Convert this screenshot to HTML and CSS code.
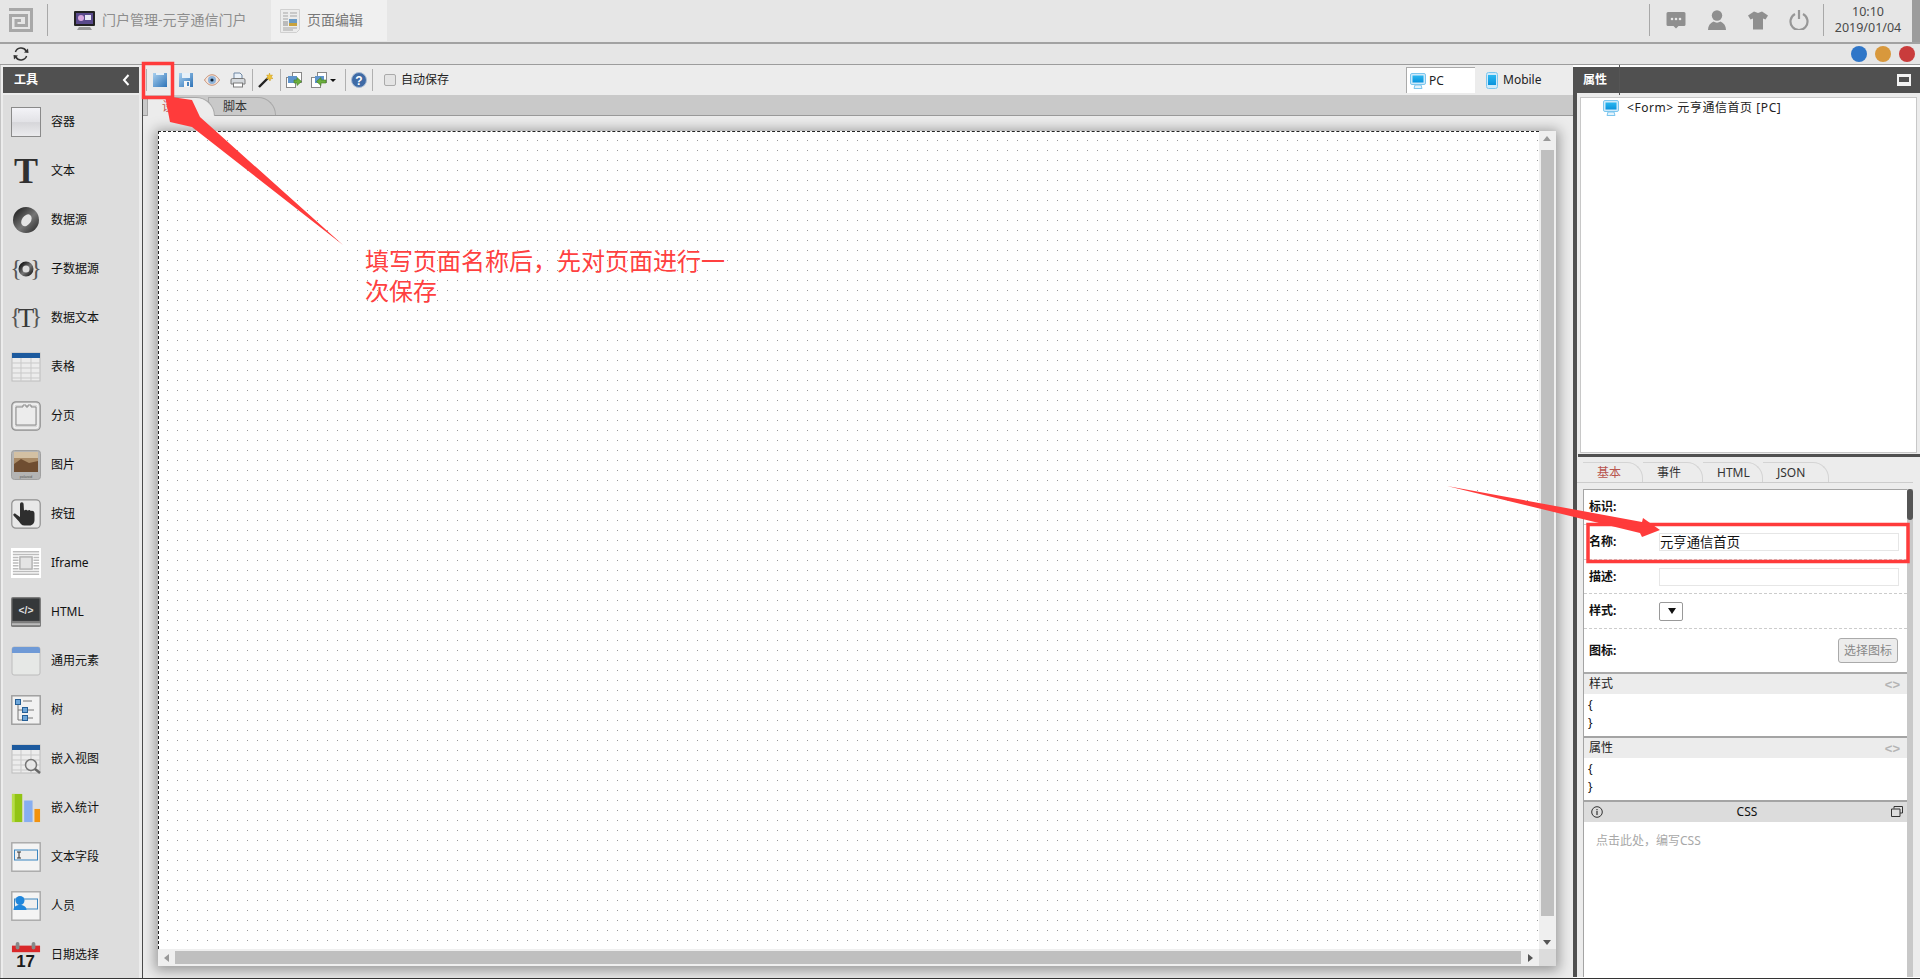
FILE: index.html
```html
<!DOCTYPE html>
<html lang="zh">
<head>
<meta charset="utf-8">
<title>页面编辑</title>
<link rel="stylesheet" href="styles.css">
</head>
<body>
<svg class="defs" aria-hidden="true">
  <defs>
    <linearGradient id="gGlass" x1="0" y1="0" x2="0" y2="1"><stop offset="0" stop-color="#f4f4f8"/><stop offset=".5" stop-color="#e2e2e6"/><stop offset=".52" stop-color="#d6d6da"/><stop offset="1" stop-color="#ececee"/></linearGradient>
    <linearGradient id="gRing" x1="0" y1="0" x2="1" y2="1"><stop offset="0" stop-color="#111"/><stop offset=".55" stop-color="#777"/><stop offset="1" stop-color="#222"/></linearGradient>
    <linearGradient id="gBlue" x1="0" y1="0" x2="1" y2="1"><stop offset="0" stop-color="#a9d0ef"/><stop offset="1" stop-color="#2f74b8"/></linearGradient>
    <linearGradient id="gScreen" x1="0" y1="0" x2="0" y2="1"><stop offset="0" stop-color="#2bb7f0"/><stop offset="1" stop-color="#0a93dc"/></linearGradient>
    <symbol id="pc" viewBox="0 0 16 16">
      <rect x=".5" y=".5" width="15" height="11" rx="1.5" fill="#cfeafa" stroke="#7cc6ee"/>
      <rect x="2.5" y="2.5" width="11" height="7" fill="url(#gScreen)"/>
      <path d="M5 12h6l1 3.5H4z" fill="#e3f3fc" stroke="#7cc6ee"/>
    </symbol>
    <symbol id="grid" viewBox="0 0 30 30">
      <rect x="1" y="1" width="28" height="28" fill="#ececec" stroke="#bdbdbd"/>
      <rect x="1" y="1" width="28" height="5" fill="#1c5a9e"/>
      <path d="M1 11h28M1 16h28M1 21h28M1 26h28M10 6v23M20 6v23" stroke="#c9c9c9" fill="none"/>
    </symbol>
  </defs>
</svg>

<header class="topbar">
  <svg class="logo" viewBox="0 0 24 24"><path d="M0 1.500H22.500V22.500H1.500V7.500H17.500V17.500H7V12.500H12" fill="none" stroke="#a8a8a8" stroke-width="3"/></svg>
  <span class="top-sep top-sep-a"></span>
  <div class="task">
    <svg class="task-ico" viewBox="0 0 23 19"><rect x="1" y="0" width="21" height="15" rx="1" fill="#222"/><rect x="3" y="2" width="17" height="11" fill="#5a4a8c"/><circle cx="8" cy="7" r="3" fill="#d9a8e0"/><rect x="12" y="4" width="6" height="5" fill="#e8e8f4"/><path d="M6 16h11l2 3H4z" fill="#9a9a9a"/></svg>
    <span>门户管理-元亨通信门户</span>
  </div>
  <div class="task task-on">
    <svg class="task-ico task-ico-b" viewBox="0 0 20 24"><path d="M.5.5h19v20l-3 3H.5z" fill="#ececec" stroke="#d0d0d0"/><path d="M3 4h5M10 4h7M3 7h5M10 7h7M3 10h5M3 19h14M3 21h10" stroke="#a5a5a5"/><rect x="9" y="10" width="8" height="7" fill="#6c9bc4"/><rect x="9" y="14" width="8" height="3" fill="#c9a23c"/><rect x="3" y="12" width="5" height="5" fill="#bbb"/></svg>
    <span>页面编辑</span>
  </div>
  <div class="top-right">
    <span class="top-sep"></span>
    <svg class="sys" viewBox="0 0 20 20"><path d="M2 2h16a1.500 1.500 0 0 1 1.500 1.500v11a1.500 1.500 0 0 1-1.500 1.500h-5.500l-2.500 2.500-2.500-2.500H2a1.500 1.500 0 0 1-1.500-1.500v-11A1.500 1.500 0 0 1 2 2z" fill="#8f8f8f"/><circle cx="6" cy="9" r="1.300" fill="#e6e6e6"/><circle cx="10" cy="9" r="1.300" fill="#e6e6e6"/><circle cx="14" cy="9" r="1.300" fill="#e6e6e6"/></svg>
    <svg class="sys" viewBox="0 0 20 20"><circle cx="10" cy="5.500" r="5.200" fill="#8f8f8f"/><path d="M1 20c0-4 2-7 5.500-8.500 2 1.500 5 1.500 7 0C17 13 19 16 19 20z" fill="#8f8f8f"/></svg>
    <svg class="sys" viewBox="0 0 20 20"><path d="M6 1.500l4 1.500 4-1.500 6 4-2.500 4-2.500-1v11H5V8.500l-2.500 1L0 5.500z" fill="#8f8f8f"/></svg>
    <svg class="sys" viewBox="0 0 20 20"><path d="M6 4a8.500 8.500 0 1 0 8 0" fill="none" stroke="#979797" stroke-width="2.200"/><path d="M10 0v9" stroke="#979797" stroke-width="2.200"/></svg>
    <span class="top-sep"></span>
    <div class="clock"><span>10:10</span><span>2019/01/04</span></div>
    <span class="top-end"></span>
  </div>
</header>

<div class="subbar">
  <svg class="refresh" viewBox="0 0 16 16"><path d="M2.400 6A6 6 0 0 1 13.200 5M13.600 10A6 6 0 0 1 2.800 11" fill="none" stroke="#333" stroke-width="1.500"/><path d="M15 2.500l.5 4.500-4.500-.5zM1 13.500L.5 9l4.500.5z" fill="#333"/></svg>
  <div class="lights"><i class="light l-blue"></i><i class="light l-orange"></i><i class="light l-red"></i></div>
</div>

<main class="main">
  <aside class="tools">
    <div class="panel-head"><span>工具</span><svg class="chev" viewBox="0 0 8 12"><path d="M6.500 1L2 6l4.500 5" fill="none" stroke="#fff" stroke-width="2"/></svg></div>
    <ul class="tool-list">
      <li><svg viewBox="0 0 30 30"><rect x=".5" y=".5" width="29" height="29" fill="url(#gGlass)" stroke="#8a8a8a"/></svg>容器</li>
      <li><svg viewBox="0 0 30 30"><text x="15" y="27" class="ico-t">T</text></svg>文本</li>
      <li><svg viewBox="0 0 30 30"><circle cx="15" cy="15" r="13" fill="url(#gRing)"/><ellipse cx="15.500" cy="15" rx="4.500" ry="6.500" transform="rotate(35 15 15)" fill="#e4e4e4"/></svg>数据源</li>
      <li><svg viewBox="0 0 30 30"><text x="5" y="22" class="ico-b">{</text><text x="25" y="22" class="ico-b">}</text><circle cx="15" cy="15" r="5.500" fill="#ddd" stroke="url(#gRing)" stroke-width="4"/></svg>子数据源</li>
      <li><svg viewBox="0 0 30 30"><text x="4.500" y="21" class="ico-b">{</text><text x="25.500" y="21" class="ico-b">}</text><text x="15" y="24" class="ico-s">T</text></svg>数据文本</li>
      <li><svg viewBox="0 0 30 30"><use href="#grid"/></svg>表格</li>
      <li><svg viewBox="0 0 30 30"><rect x=".8" y=".8" width="28.400" height="28.400" rx="4" fill="#d8d8d8" stroke="#8f8f8f" stroke-width="1.200"/><rect x="3" y="3" width="24" height="24" rx="2" fill="none" stroke="#fff"/><path d="M5 24V6h7V4h3v2h2V4h3v2h5v18z" fill="#ececec" stroke="#8a8a8a"/></svg>分页</li>
      <li><svg viewBox="0 0 30 30"><rect x=".5" y=".5" width="29" height="29" rx="3" fill="#b4b4b4" stroke="#a0a0a0"/><rect x="3" y="2" width="24" height="20" fill="#a98a66"/><path d="M3 14l7-5 8 4 9-2v11H3z" fill="#6f4d31"/><rect x="3" y="2" width="24" height="6" fill="#d3c0a3"/><text x="15" y="27.500" class="ico-p">polaroid</text></svg>图片</li>
      <li><svg viewBox="0 0 30 30"><rect x=".8" y=".8" width="28.400" height="28.400" rx="4" fill="#e8e8e8" stroke="#8f8f8f" stroke-width="1.200"/><path d="M9 5a1.800 1.800 0 0 1 3.600 0l.4 6.500 1-.5a1.600 1.600 0 0 1 2.300.6l1.200-.4a1.600 1.600 0 0 1 2.200.8l1.200-.2c1.700 0 2.600 1.200 2.600 2.700V21c0 3-2 5.500-5 5.500h-5c-3 0-4-2-5.500-4L2.500 16.500c-.8-1.200 1-2.700 2.200-1.600L9 18z" fill="#2e2e2e"/></svg>按钮</li>
      <li><svg viewBox="0 0 32 32"><rect width="32" height="32" fill="#fff"/><path d="M2 4h28M2 7h28M2 10h6M24 10h6M2 13h6M24 13h6M2 16h6M24 16h6M2 19h6M24 19h6M2 22h6M24 22h6M2 25h28M2 28h28" stroke="#bcbcbc" stroke-width="1.600"/><rect x="9.500" y="9.500" width="13" height="13" fill="#e4e4e4" stroke="#b0b0b0" stroke-width="1.500"/></svg>Iframe</li>
      <li><svg viewBox="0 0 32 32"><rect width="32" height="32" rx="2" fill="#7c7c7c"/><rect x="1.500" y="1.500" width="29" height="24" fill="#35383a"/><rect x="1" y="28" width="30" height="2" fill="#bbb"/><text x="16" y="18" class="ico-h">&lt;/&gt;</text></svg>HTML</li>
      <li><svg viewBox="0 0 30 30"><rect x="1" y="1" width="28" height="28" rx="2" fill="#e6e8e6" stroke="#bcbcbc"/><path d="M1 3a2 2 0 0 1 2-2h24a2 2 0 0 1 2 2v4H1z" fill="#6f9ad6"/></svg>通用元素</li>
      <li><svg viewBox="0 0 30 30"><rect x=".8" y=".8" width="28.400" height="28.400" fill="#f1f1f1" stroke="#9c9c9c" stroke-width="1.400"/><path d="M7 8v17h6M7 15h6M12 6h9M16 15h7M16 23h6" fill="none" stroke="#777"/><g fill="#6da5d8" stroke="#255f96"><rect x="4.500" y="4.500" width="5" height="5"/><rect x="11.500" y="12.500" width="5" height="5"/><rect x="11.500" y="20.500" width="5" height="5"/></g></svg>树</li>
      <li><svg viewBox="0 0 30 30"><use href="#grid"/><circle cx="20" cy="21" r="5.500" fill="#e8e8e8" fill-opacity=".8" stroke="#777" stroke-width="1.500"/><path d="M24 25l5 4" stroke="#666" stroke-width="2.500"/></svg>嵌入视图</li>
      <li><svg viewBox="0 0 32 32"><path d="M1 1h11v30H1z" fill="#92c414"/><path d="M1 1h3v30H1z" fill="#b7dd4a"/><path d="M14 8h9v23h-9z" fill="#87aef0"/><path d="M25 17h6v14h-6z" fill="#f2920f"/></svg>嵌入统计</li>
      <li><svg viewBox="0 0 30 30"><rect x=".8" y=".8" width="28.400" height="28.400" fill="#f4f4f4" stroke="#a8a8a8" stroke-width="1.400"/><rect x="3.500" y="8" width="23" height="10" fill="#efefef" stroke="#3a85c0"/><path d="M6 10h4M6 16h4M8 10v6" stroke="#333"/></svg>文本字段</li>
      <li><svg viewBox="0 0 30 30"><rect x=".8" y=".8" width="28.400" height="28.400" fill="#f4f4f4" stroke="#a8a8a8" stroke-width="1.400"/><rect x="3.500" y="8" width="23" height="10" fill="#efefef" stroke="#3a85c0"/><circle cx="9" cy="9.500" r="4.500" fill="#1f86dc"/><path d="M2.500 19c0-3.500 3-5 6.500-5s6.500 1.500 6.500 5z" fill="#1f86dc"/></svg>人员</li>
      <li><svg viewBox="0 0 32 30"><path d="M1 5h30v7H1z" fill="#d9282a"/><rect x="5" y="1" width="4" height="8" rx="2" fill="#888"/><rect x="22" y="1" width="4" height="8" rx="2" fill="#888"/><text x="15.500" y="28" class="ico-d">17</text></svg>日期选择</li>
    </ul>
  </aside>

  <section class="center">
    <div class="toolbar">
      <span class="tb-sep tb-sep-first"></span>
      <button class="tb" type="button"><svg viewBox="0 0 14 14"><rect width="14" height="14" fill="url(#gBlue)"/><rect x="3" y="0" width="8" height="2" fill="#e6f0f8"/></svg></button>
      <button class="tb" type="button"><svg viewBox="0 0 14 14"><rect width="14" height="14" fill="url(#gBlue)"/><rect x="3" y="0" width="8" height="5" fill="#e6f0f8"/><rect x="5" y="8" width="6" height="6" fill="#f6f6f6"/><rect x="8" y="9" width="2" height="4" fill="#4a86c0"/></svg></button>
      <button class="tb" type="button"><svg class="wide" viewBox="0 0 16 12"><path d="M.5 6C3 2 5.500.8 8 .8S13 2 15.500 6C13 10 10.500 11.200 8 11.200S3 10 .5 6z" fill="#f3e4dc" stroke="#c98f70"/><circle cx="8" cy="6" r="4" fill="#8fb4da"/><circle cx="8" cy="6" r="1.600" fill="#123"/></svg></button>
      <button class="tb" type="button"><svg class="wide" viewBox="0 0 16 16"><path d="M4 7V1h6l2 2v4" fill="#eaf1f8" stroke="#6f87a3"/><path d="M1 8a1.500 1.500 0 0 1 1.500-1.500h11A1.500 1.500 0 0 1 15 8v4H1z" fill="#d4d8dc" stroke="#7a7a7a"/><rect x="3.500" y="11" width="9" height="4" fill="#fff" stroke="#7a7a7a"/></svg></button>
      <span class="tb-sep"></span>
      <button class="tb" type="button"><svg class="wide" viewBox="0 0 16 16"><path d="M1 15L10 6" stroke="#222" stroke-width="2.400"/><path d="M11.500 1l.7 2.300 2.300-.3-1.300 2 1.800 1.500-2.400.3L12 9l-1.200-2.200-2.300.1 1.400-1.900L8.700 3l2.200.3z" fill="#f1c232" stroke="#c89a1c" stroke-width=".5"/></svg></button>
      <span class="tb-sep"></span>
      <button class="tb" type="button"><svg class="wide" viewBox="0 0 16 16"><rect x="6.500" y=".5" width="9" height="10" fill="#fff" stroke="#888"/><rect x=".5" y="5.500" width="9" height="10" fill="#fff" stroke="#888"/><rect x="2" y="4" width="9" height="7" fill="#5f94cc"/><path d="M8 8h3V5.500l4.500 4-4.500 4V11H8z" fill="#6cae3e" stroke="#3f7d1e" stroke-width=".6"/></svg></button>
      <button class="tb tb-caret" type="button"><svg class="wide" viewBox="0 0 16 16"><rect x="6.500" y=".5" width="9" height="10" fill="#fff" stroke="#888"/><rect x=".5" y="5.500" width="9" height="10" fill="#fff" stroke="#888"/><rect x="4" y="4" width="9" height="7" fill="#5f94cc"/><path d="M15 8h-5V5.500l-4.500 4 4.500 4V11h5z" fill="#6cae3e" stroke="#3f7d1e" stroke-width=".6"/></svg><i class="caret"></i></button>
      <span class="tb-sep"></span>
      <button class="tb tb-help" type="button"><svg class="wide" viewBox="0 0 16 16"><circle cx="8" cy="8" r="7.500" fill="#3f6ba6" stroke="#a9bcd4"/><text x="8" y="12.500" class="ico-q">?</text></svg></button>
      <span class="tb-sep"></span>
      <label class="autosave"><span class="check"></span>自动保存</label>
      <div class="views">
        <div class="view view-on"><svg viewBox="0 0 16 16"><use href="#pc"/></svg>PC</div>
        <div class="view view-m"><svg class="mob" viewBox="0 0 12 17"><rect x=".5" y=".5" width="11" height="16" rx="2" fill="#cfeafa" stroke="#7cc6ee"/><rect x="2" y="3" width="8" height="10" fill="url(#gScreen)"/></svg>Mobile</div>
      </div>
    </div>
    <div class="doc-tabs">
      <div class="doc-tab doc-tab-on">设计</div>
      <div class="doc-tab">脚本</div>
    </div>
    <div class="stage">
      <div class="canvas">
        <div class="canvas-row">
          <div class="dots"></div>
          <div class="vscroll"><i class="arr arr-up"></i><span class="vthumb"></span><i class="arr arr-down"></i></div>
        </div>
        <div class="hscroll"><i class="arr arr-left"></i><span class="hthumb"></span><i class="arr arr-right"></i><span class="corner"></span></div>
      </div>
    </div>
  </section>

  <aside class="props">
    <div class="panel-head panel-head-r"><span>属性</span><svg class="maxi" viewBox="0 0 14 12"><rect width="14" height="12" fill="#f2f2f2"/><rect x="2" y="3" width="10" height="5" fill="#505050"/></svg></div>
    <div class="props-body">
      <div class="tree"><svg viewBox="0 0 16 16"><use href="#pc"/></svg><span>&lt;Form&gt; 元亨通信首页 [PC]</span></div>
      <div class="divider"></div>
      <div class="prop-tabs">
        <div class="prop-tab prop-tab-on">基本</div>
        <div class="prop-tab">事件</div>
        <div class="prop-tab">HTML</div>
        <div class="prop-tab prop-tab-last">JSON</div>
      </div>
      <div class="form-wrap">
        <div class="form">
          <div class="row row-a"><b>标识:</b></div>
          <div class="row row-a"><b>名称:</b><span class="field">元亨通信首页</span></div>
          <div class="row row-c"><b>描述:</b><span class="field"></span></div>
          <div class="row row-a"><b>样式:</b><span class="select"><i></i></span></div>
          <div class="row row-e"><b>图标:</b><button class="pick" type="button">选择图标</button></div>
          <div class="sec-head"><span>样式</span><em>&lt;&gt;</em></div>
          <div class="code">{<br>}</div>
          <div class="sec-head"><span>属性</span><em>&lt;&gt;</em></div>
          <div class="code">{<br>}</div>
          <div class="css-head">
            <svg viewBox="0 0 12 12"><circle cx="6" cy="6" r="5.300" fill="none" stroke="#333" stroke-width="1"/><path d="M6 5v4M6 3v1.200" stroke="#333" stroke-width="1.200"/></svg>
            <span>CSS</span>
            <svg viewBox="0 0 12 12"><path d="M3 2.500V.5h8.500v6.500H9M.5 3h8.500v7.500H.5z" fill="none" stroke="#333"/></svg>
          </div>
          <div class="css-body">点击此处，编写CSS</div>
        </div>
        <div class="form-scroll"><span></span></div>
      </div>
    </div>
  </aside>
</main>

<svg class="marks" viewBox="0 0 1920 979" aria-hidden="true">
  <rect class="mark-box" x="143.500" y="63.500" width="29" height="34"/>
  <polygon class="mark-fill" points="343,245 200,117 192,100 165,96 170,122 192,127"/>
  <polygon class="mark-fill" points="1447,486 1642,522 1643,518 1660,530 1642,537 1640,533"/>
  <rect class="mark-box" x="1588" y="524.500" width="320" height="37"/>
</svg>
<p class="note">填写页面名称后，先对页面进行一次保存</p>
</body>
</html>
```

FILE: styles.css
```css
* { box-sizing: border-box; }
html, body { margin: 0; height: 979px; overflow: hidden; }
body {
  position: relative;
  display: flex;
  flex-direction: column;
  background: #ececec;
  color: #222;
  font: 12px/1.3 "Noto Sans", "Noto Sans CJK SC", sans-serif;
}
.defs { position: absolute; width: 0; height: 0; }

/* top bar */
.topbar {
  height: 44px;
  flex: none;
  display: flex;
  align-items: flex-start;
  background: #e6e6e6;
  border-bottom: 2px solid #a2a2a2;
  padding-left: 9px;
}
.logo { width: 24px; height: 24px; margin-top: 8px; flex: none; }
.top-sep { width: 1px; height: 32px; margin-top: 4px; background: #a8a8a8; flex: none; }
.top-sep-a { margin-left: 14px; margin-right: 25px; }
.task {
  height: 41px;
  display: flex;
  align-items: center;
  gap: 6px;
  font-size: 14px;
  color: #8d8d8d;
  width: 198px;
}
.task-ico { width: 23px; height: 19px; flex: none; }
.task-on { width: 116px; background: #f0f0f0; padding-left: 9px; color: #777; gap: 7px; }
.task-ico-b { width: 20px; height: 24px; }
.top-right { margin-left: auto; display: flex; align-items: flex-start; }
.sys { width: 20px; height: 20px; margin: 10px 0 0 21px; flex: none; }
.sys:first-of-type { margin-left: 16px; }
.clock {
  width: 88px;
  padding-top: 4px;
  display: flex;
  flex-direction: column;
  align-items: center;
  line-height: 16px;
  font-size: 12.500px;
  color: #4a4a4a;
}
.top-end { width: 8px; height: 42px; background: #9c9c9c; }
.sys + .top-sep { margin-left: 14px; }

/* second bar */
.subbar {
  height: 21px;
  flex: none;
  display: flex;
  align-items: center;
  justify-content: space-between;
  padding: 0 5px 0 13px;
  background: #e6e6e6;
  border-bottom: 1px solid #9c9c9c;
}
.refresh { width: 16px; height: 16px; }
.lights { display: flex; gap: 8px; }
.light { width: 16px; height: 16px; border-radius: 50%; }
.l-blue { background: #2f76c8; }
.l-orange { background: #d8983c; }
.l-red { background: #c93c3c; }

/* main */
.main {
  flex: 1;
  min-height: 0;
  display: flex;
  border-bottom: 1px solid #333;
}

/* tools */
.tools {
  width: 142px;
  flex: none;
  padding: 2px 3px 0 2px;
  overflow: hidden;
  background: #ececec;
  border-left: 1px solid #c4c4c4;
}
.panel-head {
  height: 26px;
  display: flex;
  align-items: center;
  justify-content: space-between;
  padding: 0 9px 0 11px;
  background: #505050;
  color: #fff;
  font-weight: 700;
}
.chev { width: 8px; height: 12px; }
.tool-list {
  list-style: none;
  margin: 2px 0 0;
  padding: 2px 0 0 8px;
  height: 890px;
  background: #dddddd;
  overflow: hidden;
  color: #111;
}
.tool-list li {
  height: 49px;
  display: flex;
  align-items: center;
  gap: 10px;
}
.tool-list svg { width: 30px; height: 30px; flex: none; overflow: visible; }
.ico-t { font: 700 36px "Liberation Serif", serif; text-anchor: middle; fill: #303030; }
.ico-s { font: 400 27px "Liberation Serif", serif; text-anchor: middle; fill: #3a3a3a; }
.ico-b { font: 400 24px "Liberation Serif", serif; text-anchor: middle; fill: #555; }
.ico-p { font: 400 3.500px "Liberation Sans", sans-serif; text-anchor: middle; fill: #555; }
.ico-h { font: 700 11px "Liberation Sans", sans-serif; text-anchor: middle; fill: #ddd; }
.ico-d { font: 700 18px "Liberation Sans", sans-serif; text-anchor: middle; fill: #1b1b1b; }
.ico-q { font: 700 12px "Liberation Sans", sans-serif; text-anchor: middle; fill: #fff; }

/* centre */
.center {
  flex: 1;
  min-width: 0;
  display: flex;
  flex-direction: column;
  border-left: 1px solid #4a4a4a;
  background: #ececec;
}
.toolbar {
  height: 30px;
  flex: none;
  display: flex;
  align-items: center;
  padding-left: 3px;
}
.tb {
  width: 26px;
  height: 26px;
  flex: none;
  padding: 0;
  border: 0;
  background: none;
  display: flex;
  align-items: center;
  justify-content: center;
}
.tb svg { width: 14px; height: 14px; }
.tb svg.wide { width: 16px; height: 16px; }
.tb-sep { width: 1px; height: 22px; margin-left: 1px; background: #b0b0b0; flex: none; }
.tb-sep-first { margin-left: 0; }
.tb-caret { width: 37px; justify-content: flex-start; padding-left: 4px; gap: 3px; }
.tb-help { width: 25px; }
.caret { border: 3px solid transparent; border-top: 3px solid #111; border-bottom: 0; }
.autosave { display: flex; align-items: center; gap: 5px; margin-left: 11px; color: #222; }
.check {
  width: 12px;
  height: 12px;
  border: 1px solid #aaa;
  border-radius: 2px;
  background: #e4e4e4;
}
.views { margin-left: auto; display: flex; padding-right: 15px; }
.view {
  height: 26px;
  display: flex;
  align-items: center;
  gap: 3px;
  padding-left: 3px;
  width: 69px;
  font-size: 12px;
}
.view svg { width: 16px; height: 16px; }
.view-on { background: #fff; border-left: 1px solid #aaa; border-top: 1px solid #aaa; }
.view-m { width: 83px; padding-left: 11px; gap: 5px; }
.view svg.mob { width: 12px; height: 17px; }
.doc-tabs {
  height: 21px;
  flex: none;
  display: flex;
  align-items: flex-end;
  padding-left: 4px;
  background: #c9c9c9;
  border-bottom: 1px solid #9a9a9a;
}
.doc-tab {
  width: 68px;
  height: 18px;
  margin-right: -7px;
  padding-left: 14px;
  line-height: 18px;
  background: #c9c9c9;
  border: 1px solid #a8a8a8;
  border-bottom: 0;
  border-radius: 0 20px 0 0;
  color: #333;
}
.doc-tab-on {
  position: relative;
  z-index: 1;
  height: 19px;
  margin-bottom: -1px;
  background: #ececec;
  color: #c0564f;
}
.stage { flex: 1; min-height: 0; padding: 15px 17px 12px 15px; }
.canvas {
  height: 100%;
  display: flex;
  flex-direction: column;
  background: #fff;
  box-shadow: 0 2px 12px 3px rgba(0, 0, 0, .35);
}
.canvas-row { flex: 1; min-height: 0; display: flex; }
.dots {
  flex: 1;
  border-top: 1px dashed #222;
  border-left: 1px dashed #222;
  background-color: #fff;
  background-image:
    linear-gradient(90deg, #fff 9px, transparent 9px),
    linear-gradient(#fff 9px, #999 9px);
  background-size: 10px 10px;
  background-origin: border-box;
}
.vscroll {
  width: 17px;
  flex: none;
  position: relative;
  background: #efefef;
  padding: 19px 2px 33px;
}
.vthumb { display: block; height: 100%; background: #bfbfbf; }
.hscroll {
  height: 17px;
  flex: none;
  display: flex;
  align-items: center;
  background: #efefef;
  padding-left: 17px;
}
.hthumb { width: 1346px; height: 13px; background: #bfbfbf; flex: none; }
.corner { width: 17px; height: 17px; margin-left: auto; background: #dcdcdc; }
.arr { position: absolute; width: 0; height: 0; border: 4px solid transparent; }
.arr-up { top: 5px; left: 4px; border-bottom: 5px solid #999; border-top: 0; }
.arr-down { bottom: 4px; left: 4px; border-top: 5px solid #555; border-bottom: 0; }
.arr-left, .arr-right { position: static; flex: none; }
.arr-left { margin-left: -11px; margin-right: 6px; border-right: 5px solid #999; border-left: 0; }
.arr-right { margin-left: 7px; border-left: 5px solid #555; border-right: 0; }

/* properties */
.props { width: 347px; flex: none; padding-top: 2px; position: relative; background: #fff; }
.props::after {
  content: "";
  position: absolute;
  left: 46px;
  top: 0;
  width: 1px;
  height: 30px;
  background: #555;
}
.panel-head-r { padding: 0 9px 0 10px; }
.maxi { width: 14px; height: 12px; }
.props-body {
  height: 884px;
  display: flex;
  flex-direction: column;
  border-left: 4px solid #505050;
  background: #ececec;
}
.tree {
  height: 356px;
  flex: none;
  margin: 4px 3px 1px;
  padding: 1px 0 0 22px;
  display: flex;
  align-items: flex-start;
  gap: 8px;
  background: #fff;
  border: 1px solid #c8c8c8;
  color: #222;
  line-height: 18px;
  letter-spacing: .55px;
}
.tree svg { width: 16px; height: 16px; flex: none; margin-top: 1px; }
.divider { height: 3px; flex: none; margin-left: 1px; background: #505050; }
.prop-tabs {
  height: 26px;
  flex: none;
  display: flex;
  align-items: flex-end;
  padding-left: 6px;
  margin-right: 7px;
  border-bottom: 1px solid #ccc;
}
.prop-tab {
  width: 60px;
  height: 20px;
  padding-left: 14px;
  line-height: 20px;
  border: 1px solid #d4d4d4;
  border-bottom: 0;
  border-left: 0;
  border-radius: 0 16px 0 0;
  color: #333;
  background: #ececec;
}
.prop-tab-on { width: 60px; color: #b8554e; border-left: 0; }
.prop-tab-last { width: 66px; }
.form-wrap {
  flex: 1;
  min-height: 0;
  display: flex;
  margin: 6px 7px 0 6px;
}
.form {
  flex: 1;
  min-width: 0;
  display: flex;
  flex-direction: column;
  background: #fff;
  border: 1px solid #a4a4a4;
  border-right: 0;
  border-bottom: 0;
}
.form-scroll { width: 6px; flex: none; background: #c8c8c8; }
.form-scroll span { display: block; height: 31px; border-radius: 3px; background: #555; }
.row {
  display: flex;
  align-items: center;
  padding-left: 5px;
  border-bottom: 1px dashed #ccc;
  position: relative;
}
.row b { width: 70px; flex: none; color: #111; }
.row-a { height: 35px; }
.row-c { height: 34px; }
.row-e { height: 45px; border-bottom: 2px solid #aaa; justify-content: space-between; padding-right: 9px; }
.field {
  width: 240px;
  height: 18px;
  padding-left: 0;
  font-size: 13.330px;
  line-height: 16px;
  border: 1px solid #e6e6e6;
  color: #111;
}
.select {
  width: 24px;
  height: 19px;
  display: flex;
  align-items: center;
  justify-content: center;
  border: 1px solid #999;
  border-radius: 2px;
}
.select i { border: 4px solid transparent; border-top: 6px solid #111; border-bottom: 0; margin-left: 2px; }
.pick {
  width: 60px;
  height: 25px;
  padding: 0;
  font: inherit;
  color: #888;
  background: #ececec;
  border: 1px solid #aaa;
  border-radius: 3px;
}
.sec-head {
  height: 20px;
  flex: none;
  display: flex;
  align-items: center;
  justify-content: space-between;
  padding: 0 7px 0 5px;
  background: #ececec;
  color: #222;
}
.sec-head em { font: 700 13px "Liberation Sans", sans-serif; color: #b4b4b4; }
.code {
  height: 44px;
  flex: none;
  padding: 2px 0 0 4px;
  line-height: 18px;
  border-bottom: 2px solid #a4a4a4;
  color: #111;
}
.css-head {
  height: 20px;
  flex: none;
  display: flex;
  align-items: center;
  justify-content: space-between;
  padding: 0 4px 0 7px;
  background: #dcdcdc;
  color: #111;
}
.css-head svg { width: 12px; height: 12px; }
.css-body { flex: 1; padding: 11px 12px; color: #a8a8a8; }

/* annotations laid over the screenshot */
.marks { position: absolute; left: 0; top: 0; z-index: 2; width: 1920px; height: 979px; pointer-events: none; }
.mark-box { fill: none; stroke: #ff3b3b; stroke-width: 3.500; }
.mark-fill { fill: #ff3b3b; }
.note {
  position: absolute;
  left: 365px;
  top: 245px;
  z-index: 2;
  width: 370px;
  margin: 0;
  font: 400 24px/30px "Noto Sans CJK SC", sans-serif;
  color: #ff4040;
}
```
